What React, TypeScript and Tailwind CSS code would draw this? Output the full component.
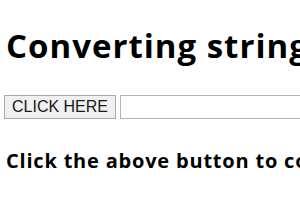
export default function App() {
  return (
    <div className="w-[300px] h-[210px] overflow-hidden bg-white pl-[4px] pt-[28px] text-black">
      <h1 className="ml-[2px] whitespace-nowrap text-[33px] leading-[36px] font-bold font-['Open_Sans',sans-serif] tracking-[1px]">
        Converting string to number
      </h1>
      <div className="mt-[31px] flex items-center gap-[4px] whitespace-nowrap">
        <button className="shrink-0 h-[24px] w-[112px] border border-[#a8a8a8] bg-[#f0f0f0] text-[16px] font-['Liberation_Sans',sans-serif] text-[#1a1a1a] flex items-center justify-center">
          CLICK HERE
        </button>
        <input className="shrink-0 h-[24px] w-[300px] border border-[#b4b4b4] bg-white" />
      </div>
      <p className="ml-[2px] mt-[30px] whitespace-nowrap text-[20px] leading-[24px] font-bold font-['Open_Sans',sans-serif] tracking-[0.8px]">
        Click the above button to convert
      </p>
    </div>
  );
}
